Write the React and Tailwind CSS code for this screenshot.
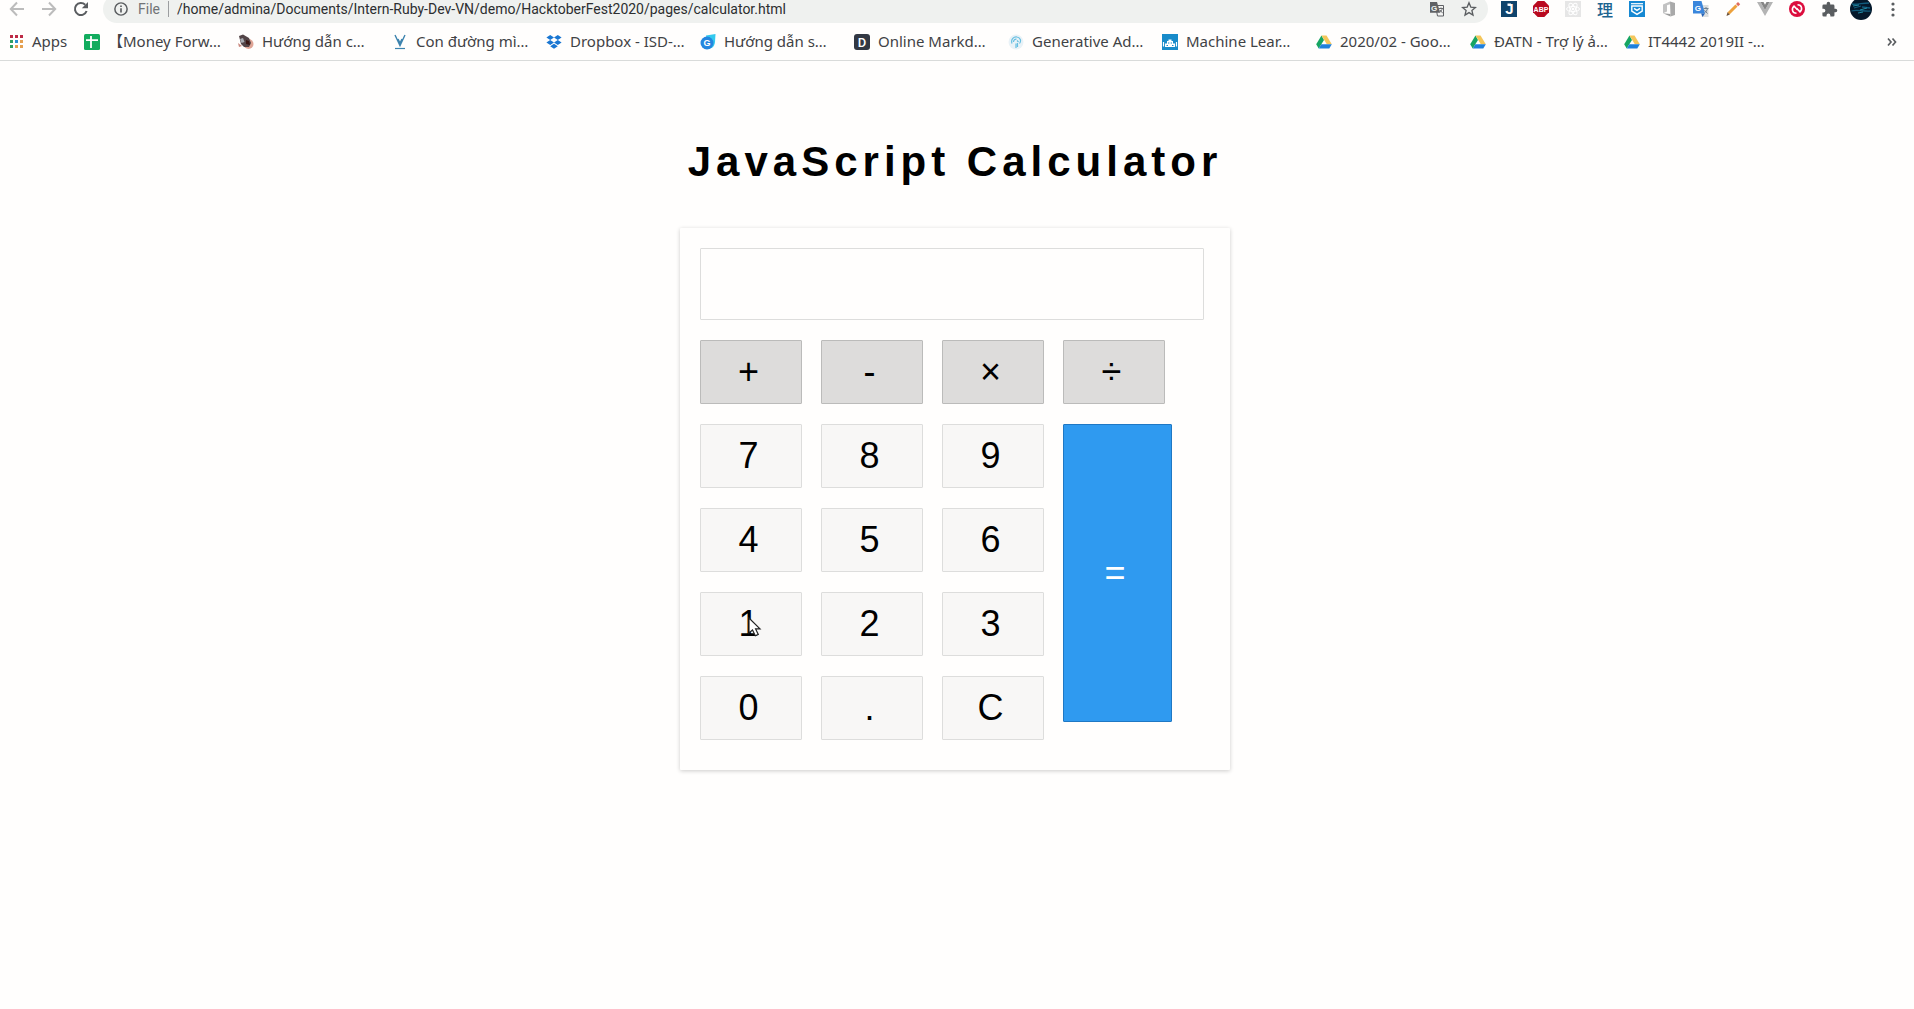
import React from "react";

function Svg({ size = 16, box = 16, className = "", children }) {
  return (
    <svg width={size} height={size} viewBox={`0 0 ${box} ${box}`} fill="none" className={`shrink-0 ${className}`} aria-hidden="true">
      {children}
    </svg>
  );
}

const ArrowIcon = ({ flip }) => (
  <Svg className={flip ? "rotate-180" : ""}>
    <path d="M15 8H2M8 1.5 1.800 8 8 14.500" stroke="#bcbcbc" strokeWidth="2" />
  </Svg>
);

const ReloadIcon = () => (
  <Svg>
    <path d="M13.600 10A6 6 0 1 1 12.200 3.800" stroke="#5a5d60" strokeWidth="2" />
    <path d="M15 1v6.200H8.800z" fill="#5a5d60" />
  </Svg>
);

const InfoIcon = () => (
  <Svg size={14}>
    <circle cx="8" cy="8" r="7" stroke="#5a5d60" strokeWidth="1.700" />
    <path d="M8 7v5M8 4v1.800" stroke="#5a5d60" strokeWidth="1.900" />
  </Svg>
);

const TranslateIcon = () => (
  <Svg>
    <path d="M6.500 4.500h8v10.500H8.500z" stroke="#5f6164" strokeWidth="1" fill="#f3f4f3" />
    <path d="M1 1h7l3.200 10.800H1z" fill="#5f6164" />
    <text x="5" y="9.500" textAnchor="middle" fontSize="8" fontWeight="700" fontFamily="Liberation Sans, sans-serif" fill="#eff1ef">G</text>
    <path d="M10 7.500h4M12 6.500v1M13.300 7.500c-.5 1.800-1.500 3-2.300 3.700M11 9l2.800 3.300" stroke="#5f6164" strokeWidth=".9" />
  </Svg>
);

const StarIcon = () => (
  <Svg>
    <path d="m8 1.800 1.800 4.300 4.600.4-3.500 3 1.100 4.600L8 11.600l-4 2.500 1.100-4.600-3.500-3 4.600-.4z" stroke="#5a5d60" strokeWidth="1.300" />
  </Svg>
);

const JIcon = () => (
  <Svg>
    <path d="M0 0h16v16H0z" fill="#0f446c" />
    <path d="M6.500 2.500H10v2.300H6.500z" fill="#fff" />
    <text x="8.500" y="13" textAnchor="middle" fontSize="15" fontWeight="700" fontFamily="Liberation Sans, sans-serif" fill="#fff">J</text>
  </Svg>
);

const AbpIcon = () => (
  <Svg>
    <path d="M4.700 0h6.600L16 4.700v6.600L11.300 16H4.700L0 11.300V4.700z" fill="#b90a20" />
    <text x="8" y="10.500" textAnchor="middle" fontSize="7" fontWeight="700" fontFamily="Liberation Sans, sans-serif" fill="#fff">ABP</text>
  </Svg>
);

const ReactIcon = () => (
  <Svg>
    <path d="M0 0h16v16H0z" fill="#e6e6e6" />
    <g stroke="#fff" strokeWidth="1">
      <ellipse cx="8" cy="8" rx="6.500" ry="2.500" />
      <ellipse cx="8" cy="8" rx="6.500" ry="2.500" transform="rotate(60 8 8)" />
      <ellipse cx="8" cy="8" rx="6.500" ry="2.500" transform="rotate(120 8 8)" />
    </g>
    <circle cx="8" cy="8" r="1.300" fill="#fff" />
  </Svg>
);

const KanjiIcon = () => (
  <span className="w-4 shrink-0 text-center font-['Noto_Sans_CJK_JP',sans-serif] text-base leading-4 font-medium text-[#1c6490]">理</span>
);

const PocketIcon = () => (
  <Svg>
    <path d="M0 0h16v16H0z" fill="#1688d2" />
    <path d="M2 2.700h12" stroke="#fff" strokeWidth="1.200" />
    <path d="M2.800 5h10.400v5L8 13.400 2.800 10z" stroke="#fff" strokeWidth="1.400" />
    <path d="m5 7.300 3 2 3-2" stroke="#fff" strokeWidth="1.400" />
  </Svg>
);

const OfficeIcon = () => (
  <Svg>
    <path d="m2 3.500 7-3L10 3 6 4.300v6.200l-4 1.700z" fill="#c2c2c2" />
    <path d="m2 12.200 7.500.8v2.500z" fill="#9c9c9c" />
    <path d="M9 .5 14 2v12l-4.500 1.500z" fill="#a9a9a9" />
  </Svg>
);

const GTranslateIcon = () => (
  <Svg>
    <path d="M6 4h9.500v12H9z" fill="#dcdedf" />
    <path d="M0 0h8.500l3.500 12.500H0z" fill="#3a86dc" />
    <path d="M8.200 12.500H12L9.500 16z" fill="#2662b5" />
    <text x="4.900" y="9.500" textAnchor="middle" fontSize="8" fontWeight="700" fontFamily="Liberation Sans, sans-serif" fill="#fff">G</text>
    <path d="M10.500 7.500h5M13 6v1.500M14.500 7.500c-.5 2-1.500 3.300-2.800 4.300M11.500 9.300l3 3.200" stroke="#6f8090" strokeWidth="1" />
  </Svg>
);

const PencilIcon = () => (
  <Svg>
    <path d="m3.500 12.500 8-8" stroke="#eda13c" strokeWidth="3" />
    <path d="m11 3 2-2 2.200 2.200-2 2z" fill="#df6c5f" />
    <path d="m2.500 11.200 2.300 2.300L1.500 15z" fill="#6c5139" />
  </Svg>
);

const VueIcon = () => (
  <Svg>
    <path d="M0 1h3.500L8 9l4.500-8H16L8 15z" fill="#b4b4b4" />
    <path d="M3.500 1h3L8 3.800 9.500 1h3L8 9z" fill="#858585" />
  </Svg>
);

const RedCircleIcon = () => (
  <Svg>
    <circle cx="8" cy="8" r="8" fill="#dc0d3d" />
    <path d="M7.500 12.300C3 12.300 2.300 7.500 5 5.200L8.500 8.800" stroke="#fff" strokeWidth="1.600" />
    <path d="M8.500 3.700C13 3.700 13.700 8.500 11 10.800L7.500 7.200" stroke="#fff" strokeWidth="1.600" />
  </Svg>
);

const PuzzleIcon = () => (
  <Svg size={17} box={24}>
    <path d="M20.500 11H19V7a2 2 0 0 0-2-2h-4V3.500a2.500 2.500 0 0 0-5 0V5H4a2 2 0 0 0-2 2v3.800h1.500a2.700 2.700 0 0 1 0 5.400H2V20a2 2 0 0 0 2 2h3.800v-1.500a2.700 2.700 0 0 1 5.400 0V22H17a2 2 0 0 0 2-2v-4h1.500a2.500 2.500 0 0 0 0-5z" fill="#5a5d60" />
  </Svg>
);

const AvatarIcon = () => (
  <Svg size={22} box={22}>
    <circle cx="11" cy="11" r="11" fill="#04182b" />
    <path d="M2 6c5 1 10-1 17-1M4 10l7-2M12 9l8 1M1.500 13c6-2 13 1 19 0" stroke="#115b7c" strokeWidth="1.300" />
    <path d="m3 8 6-1M10 12l7-2M8 15l5-1" stroke="#2aa8c4" strokeWidth=".8" />
  </Svg>
);

const DotsIcon = () => (
  <Svg>
    <g fill="#5a5d60">
      <circle cx="8" cy="3" r="1.600" />
      <circle cx="8" cy="8.500" r="1.600" />
      <circle cx="8" cy="14" r="1.600" />
    </g>
  </Svg>
);

const AppsIcon = () => (
  <Svg size={14} box={14}>
    <path d="M0 0h3v3H0zM5 0h3v3H5zM10 0h3v3h-3z" fill="#bd2a45" />
    <path d="M0 5h3v3H0zM0 10h3v3H0z" fill="#2f9e62" />
    <path d="M5 5h3v3H5z" fill="#2b8fd0" />
    <path d="M10 5h3v3h-3zM5 10h3v3H5zM10 10h3v3h-3z" fill="#e5a04f" />
  </Svg>
);

const SheetIcon = () => (
  <Svg>
    <rect width="16" height="16" rx="1.500" fill="#12ac5e" />
    <path d="M2 6.200h12M7 2v12" stroke="#fff" strokeWidth="1.800" />
  </Svg>
);

const BirdIcon = () => (
  <Svg>
    <circle cx="10.500" cy="10" r="5" fill="#dfa596" />
    <path d="M1 2 5 .5l6 3.500 2 5-2 4-5 0-3-3z" fill="#524447" />
    <path d="m2 5 3-1 1.500 4-3 1z" fill="#a8acb2" />
    <path d="m8 6 3 1 1 4-4-1z" fill="#391512" />
    <path d="m0 9 4 3-3 1z" fill="#c9877d" />
  </Svg>
);

const VIcon = () => (
  <Svg>
    <path d="m3 1 5 10.500L13 1M6 5l2 4 2-4" stroke="#3c83ae" strokeWidth="1.400" />
    <path d="M3 14.500h10" stroke="#3c83ae" strokeWidth="1.200" />
  </Svg>
);

const DropboxIcon = () => (
  <Svg>
    <path d="m4.200 1 3.800 2.500L4.200 6 .4 3.500zM11.800 1l3.800 2.500L11.800 6 8 3.500zM4.200 6 8 8.500 4.200 11 .4 8.500zM11.800 6l3.800 2.500-3.800 2.500L8 8.500zM8 9.800l3.800 2.400L8 14.700l-3.800-2.500z" fill="#1976d2" />
  </Svg>
);

const GDropIcon = () => (
  <Svg>
    <path d="M6 1.500 15.500 0 15 8c-.5 5-4 7-7 7z" fill="#33c9ee" />
    <circle cx="7" cy="9" r="6.500" fill="#2386df" />
    <text x="7" y="12.300" textAnchor="middle" fontSize="9" fontWeight="700" fontFamily="Liberation Sans, sans-serif" fill="#fff">G</text>
  </Svg>
);

const DIcon = () => (
  <Svg>
    <rect width="16" height="16" rx="3" fill="#323843" />
    <text x="8" y="12.500" textAnchor="middle" fontSize="13" fontWeight="500" fontFamily="Roboto, sans-serif" fill="#fff">D</text>
  </Svg>
);

const BrainIcon = () => (
  <Svg>
    <circle cx="8" cy="8" r="7.500" fill="#e9f2f7" />
    <path d="M4 9.500C2.500 5 6 2.500 9 3c3.500.5 4.500 4 2.500 6.500M8 14V9.500M5.500 8c0-2 1.500-3 3-2.800M10.500 8 9 6.500M9.500 13V9" stroke="#67bfe1" strokeWidth="1.200" />
  </Svg>
);

const RobotIcon = () => (
  <Svg>
    <path d="M0 0h16v16H0z" fill="#188bc9" />
    <path d="M6.500 5.500h3V7H11v2.500h2V13H3V9.500h2V7h1.500z" fill="#fff" />
    <path d="M1.500 8v4.500M14.500 8v4.500" stroke="#fff" strokeWidth="1.200" />
    <path d="M6 9h1.300M8.700 9H10M4.500 11.500h1.500M10 11.500h1.500" stroke="#188bc9" strokeWidth="1" />
  </Svg>
);

const DriveIcon = () => (
  <Svg>
    <path d="M5.500 1.500 8 6 2.700 14.500.2 10.300z" fill="#16a562" />
    <path d="M5.500 1.500h5l5.300 8.800h-5z" fill="#f4c65a" />
    <path d="M5.300 10.300h10.500l-2.500 4.200H2.700z" fill="#1f80dc" />
  </Svg>
);

const bookmarks = [
  [SheetIcon, "【Money Forw…"],
  [BirdIcon, "Hướng dẫn c…"],
  [VIcon, "Con đường mì…"],
  [DropboxIcon, "Dropbox - ISD-…"],
  [GDropIcon, "Hướng dẫn s…"],
  [DIcon, "Online Markd…"],
  [BrainIcon, "Generative Ad…"],
  [RobotIcon, "Machine Lear…"],
  [DriveIcon, "2020/02 - Goo…"],
  [DriveIcon, "ĐATN - Trợ lý ả…"],
  [DriveIcon, "IT4442 2019II -…"],
];

const extensions = [
  ["J", JIcon],
  ["Adblock Plus", AbpIcon],
  ["React Developer Tools", ReactIcon],
  ["Dictionary", KanjiIcon],
  ["Reader", PocketIcon],
  ["Office", OfficeIcon],
  ["Google Translate", GTranslateIcon],
  ["Pencil", PencilIcon],
  ["Vue.js devtools", VueIcon],
  ["Recorder", RedCircleIcon],
  ["Extensions", PuzzleIcon],
];

function IconButton({ label, children }) {
  return (
    <button type="button" aria-label={label} className="flex w-8 shrink-0 items-center justify-center">
      {children}
    </button>
  );
}

function Toolbar() {
  return (
    <div className="flex h-[23px] items-end overflow-hidden">
      <div className="flex h-7 w-full shrink-0 items-center pl-px">
        <IconButton label="Back"><ArrowIcon /></IconButton>
        <IconButton label="Forward"><ArrowIcon flip /></IconButton>
        <IconButton label="Reload"><ReloadIcon /></IconButton>
        <div className="ml-1.5 flex h-full min-w-0 flex-1 items-center rounded-full bg-[#eff1ef] pr-[3px] pl-[11px] font-['Roboto',sans-serif] text-sm leading-4">
          <InfoIcon />
          <span className="ml-2.5 text-[#717376]">File</span>
          <span className="mx-2 h-4 w-px bg-[#9c9ea0]" />
          <input
            aria-label="Address"
            readOnly
            value="/home/admina/Documents/Intern-Ruby-Dev-VN/demo/HacktoberFest2020/pages/calculator.html"
            className="min-w-0 flex-1 bg-transparent text-[#2c2e30] outline-none"
          />
          <IconButton label="Translate this page"><TranslateIcon /></IconButton>
          <IconButton label="Bookmark this page"><StarIcon /></IconButton>
        </div>
        <div className="ml-[5px] flex shrink-0 items-center pr-[5px]">
          {extensions.map(([label, Icon]) => (
            <IconButton key={label} label={label}><Icon /></IconButton>
          ))}
          <IconButton label="Profile"><AvatarIcon /></IconButton>
          <IconButton label="Menu"><DotsIcon /></IconButton>
        </div>
      </div>
    </div>
  );
}

function BookmarksBar() {
  return (
    <nav aria-label="Bookmarks" className="flex h-[38px] items-center border-b border-[#d9dbda] pr-4 pl-2.5 text-[15px] text-[#3f4245]">
      <a href="#apps" className="flex w-[74px] shrink-0 items-center gap-2">
        <AppsIcon />
        Apps
      </a>
      {bookmarks.map(([Icon, label]) => (
        <a key={label} href="#bookmark" className="flex w-[154px] items-center gap-2 whitespace-nowrap">
          <Icon />
          {label}
        </a>
      ))}
      <button type="button" aria-label="More bookmarks" className="ml-auto">
        <Svg size={12} box={12}>
          <path d="m2 2.500 3 3.500-3 3.500M6.500 2.500l3 3.500-3 3.500" stroke="#5a5d60" strokeWidth="1.700" />
        </Svg>
      </button>
    </nav>
  );
}

function Key({ tone = "number", children }) {
  const tones = {
    operator: "border-[#bbbbba] bg-[#dddcdb]",
    number: "border-[#dddddc] bg-[#f8f7f6]",
  };
  return (
    <button type="button" className={`relative h-16 w-[102px] rounded-[1px] border tracking-[5px] ${tones[tone]}`}>
      {children}
    </button>
  );
}

function Cursor() {
  return (
    <svg width="14" height="20" viewBox="0 0 14 20" className="absolute top-6 left-[47px]" aria-hidden="true">
      <path d="M1 1v15l3.500-3 2.800 5.800 3-1.400-2.700-5.500H12z" fill="#fff" stroke="#222" strokeWidth="1.200" />
    </svg>
  );
}

function Calculator() {
  return (
    <section className="w-full max-w-[550px] rounded-[1px] p-5 pb-[30px] text-4xl shadow-[0_1px_4px_0_rgba(0,0,0,0.2)]">
      <input aria-label="Result" readOnly value="" className="block h-[72px] w-full max-w-[504px] rounded-[1px] border border-[#dddddc] bg-transparent px-4 text-right outline-none" />
      <div className="mt-5 flex gap-[19px]">
        {["+", "-", "×", "÷"].map((op) => (
          <Key key={op} tone="operator">{op}</Key>
        ))}
      </div>
      <div className="mt-5 flex items-start gap-[19px]">
        <div className="grid grid-cols-3 gap-x-[19px] gap-y-5">
          {["7", "8", "9", "4", "5", "6", "1", "2", "3", "0", ".", "C"].map((n) => (
            <Key key={n}>
              {n}
              {n === "1" && <Cursor />}
            </Key>
          ))}
        </div>
        <button type="button" className="h-[298px] w-[109px] rounded-[1px] border border-[#1f78c4] bg-[#2f9af0] tracking-[5px] text-white">=</button>
      </div>
    </section>
  );
}

export default function App() {
  return (
    <div className="min-h-screen bg-[#fffefd] text-black">
      <header className="font-['Noto_Sans','Noto_Sans_CJK_JP',sans-serif]">
        <Toolbar />
        <BookmarksBar />
      </header>
      <main className="flex flex-col items-center pt-[77px] pr-1 font-['Liberation_Sans',sans-serif]">
        <h1 className="mb-[42px] text-[42px] leading-[48px] font-bold tracking-[5px]">JavaScript Calculator</h1>
        <Calculator />
      </main>
    </div>
  );
}
